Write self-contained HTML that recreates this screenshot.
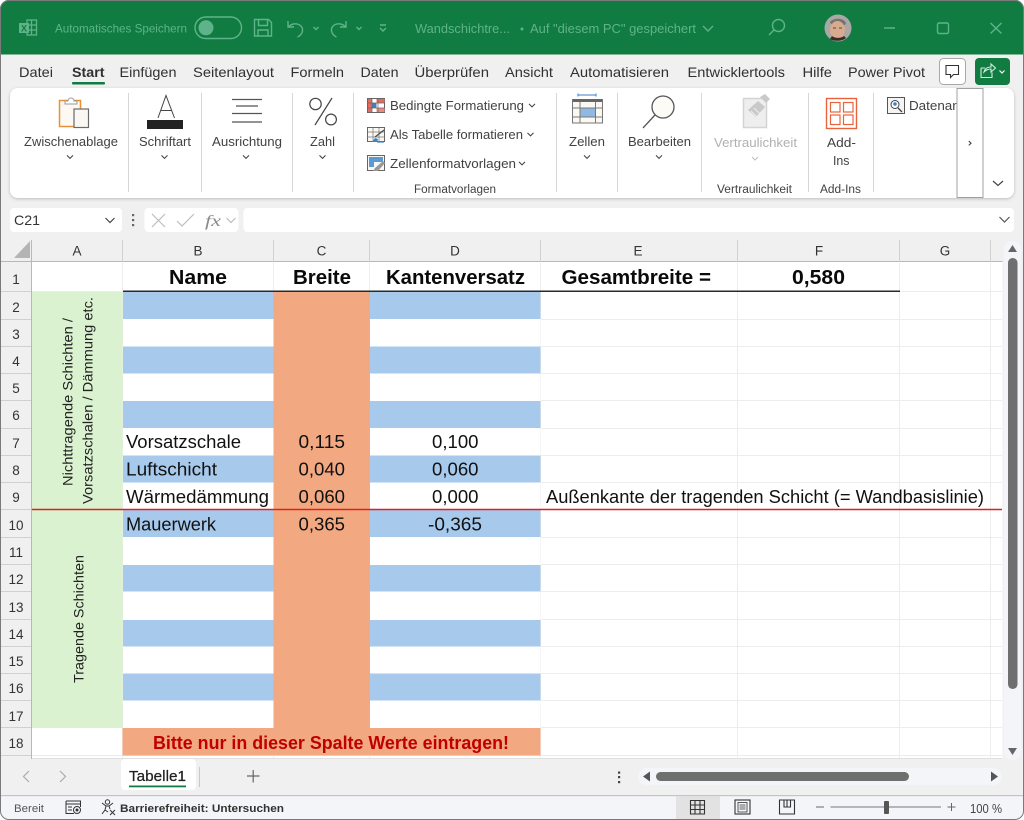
<!DOCTYPE html>
<html lang="de"><head><meta charset="utf-8"><title>Excel</title>
<style>
html,body{margin:0;padding:0;background:#fff;width:1024px;height:820px;overflow:hidden}
svg{display:block}
text{font-family:"Liberation Sans",sans-serif;fill:#262626}
.t{font-size:14px;fill:#303030}
.r{font-size:12.5px;fill:#424242}
.m{font-size:12px;fill:#5fb38a}
.h{font-size:13.5px;fill:#333;text-anchor:middle}
.c{font-size:18px;fill:#111}
.b{font-size:20px;font-weight:bold;fill:#0a0a0a}
.ch{fill:none;stroke:#444;stroke-width:1.1}
.ic{fill:none;stroke:#6a6a6a;stroke-width:1.2}
.gl{stroke:#ededed;stroke-width:1}
.tg{fill:none;stroke:#5fb38a;stroke-width:1.4}
</style></head><body>
<svg width="1024" height="820" viewBox="0 0 1024 820" xmlns="http://www.w3.org/2000/svg">
<defs>
<path id="cv" d="M-3-1.6 0 1.4 3-1.6" class="ch"/>
<filter id="sh" x="-2%" y="-5%" width="104%" height="112%"><feDropShadow dx="0" dy="1" stdDeviation="1.5" flood-color="#000" flood-opacity=".22"/></filter>
<clipPath id="win"><rect x="0" y="0" width="1024" height="820" rx="9"/></clipPath>
<clipPath id="dat"><rect x="880" y="90" width="77" height="30"/></clipPath>
</defs>
<g clip-path="url(#win)">
<rect width="1024" height="820" fill="#f0f0f0"/>
<!-- title bar -->
<rect width="1024" height="54.5" fill="#107c41"/>
<rect width="1024" height="1" fill="#6b7a70"/>
<g fill="none" stroke="#5fb38a" stroke-width="1.3"><rect x="27" y="20" width="9.5" height="15" /><path d="M27 25h9.5M27 30h9.5M31.5 20v15"/></g>
<rect x="19" y="23" width="10" height="10" fill="#5fb38a"/><text x="21" y="31.5" font-size="9" font-weight="bold" style="fill:#107c41">X</text>
<text class="m" x="55" y="32.5" textLength="132" lengthAdjust="spacingAndGlyphs">Automatisches Speichern</text>
<rect x="195" y="17" width="46.500" height="21.500" rx="10.700" class="tg"/><circle cx="206" cy="27.800" r="7.500" fill="#5fb38a"/>
<path class="tg" d="M254.500 19.500h14l3 3v13.500h-17zM258.500 19.500v6h9v-6M258 36v-6h10v6"/>
<path class="tg" d="M288 21v6h6M288.500 27c5-6 15-3 14 4-.5 3-3 5-5 6"/>
<path class="tg" stroke-width="1" d="M313.500 27l2.500 2.500 2.500-2.500M356.500 27l2.500 2.500 2.500-2.500M380 25h6M380 28l3 3 3-3"/>
<path class="tg" d="M346 21v6h-6M345.500 27c-5-6-15-3-14 4 .5 3 3 5 5 6"/>
<text class="m" x="415" y="33" textLength="95" lengthAdjust="spacingAndGlyphs" style="font-size:13px">Wandschichtre...</text>
<circle cx="522" cy="29" r="1.500" fill="#5fb38a"/>
<text class="m" x="530" y="33" textLength="166" lengthAdjust="spacingAndGlyphs" style="font-size:13px">Auf "diesem PC" gespeichert</text>
<path class="tg" d="M703 26l5 5 5-5"/>
<circle cx="778.500" cy="25.500" r="6" class="tg"/><path class="tg" d="M774 30l-5 5"/>
<circle cx="838" cy="28" r="13.500" fill="#a8a8a6"/><path d="M830 22c3-4 13-5 16 1l-1 2-14-1z" fill="#77736f"/><ellipse cx="837.500" cy="30" rx="7.500" ry="9" fill="#d8aa8e"/><path d="M830 39c4 2.500 12 2.500 16-1l-2-2c-3 2.500-9 2.500-12 0z" fill="#3a2c28"/><path d="M833 28h3M839 28h3" stroke="#5a4a46" stroke-width="1"/>
<path class="tg" d="M884 28h11"/><rect x="937.500" y="23" width="11" height="10.500" rx="1.500" class="tg"/><path class="tg" d="M990.500 23l11 10.500M1001.500 23l-11 10.500"/>
<!-- tabs -->
<g class="t">
<text class="t" x="19" y="77" textLength="34" lengthAdjust="spacingAndGlyphs">Datei</text>
<text class="t" x="72" y="77" textLength="32.500" lengthAdjust="spacingAndGlyphs" font-weight="bold">Start</text>
<text class="t" x="119.500" y="77" textLength="57" lengthAdjust="spacingAndGlyphs">Einfügen</text>
<text class="t" x="193" y="77" textLength="81" lengthAdjust="spacingAndGlyphs">Seitenlayout</text>
<text class="t" x="290.500" y="77" textLength="53.500" lengthAdjust="spacingAndGlyphs">Formeln</text>
<text class="t" x="360.500" y="77" textLength="38" lengthAdjust="spacingAndGlyphs">Daten</text>
<text class="t" x="414.500" y="77" textLength="74.500" lengthAdjust="spacingAndGlyphs">Überprüfen</text>
<text class="t" x="505" y="77" textLength="48" lengthAdjust="spacingAndGlyphs">Ansicht</text>
<text class="t" x="570" y="77" textLength="99" lengthAdjust="spacingAndGlyphs">Automatisieren</text>
<text class="t" x="687.500" y="77" textLength="97.500" lengthAdjust="spacingAndGlyphs">Entwicklertools</text>
<text class="t" x="802.500" y="77" textLength="29.500" lengthAdjust="spacingAndGlyphs">Hilfe</text>
<text class="t" x="848" y="77" textLength="77" lengthAdjust="spacingAndGlyphs">Power Pivot</text>
</g>
<rect x="72" y="82" width="33" height="2.500" rx="1" fill="#107c41"/>
<rect x="939.500" y="58.500" width="26" height="26" rx="4" fill="#fff" stroke="#a8a8a8"/>
<path d="M946 65.500h12.500v9h-5l-3 3v-3h-4.500z" fill="none" stroke="#333" stroke-width="1.100"/>
<rect x="975" y="58" width="35" height="27" rx="4" fill="#107c41"/>
<path d="M981 68v9.500h11v-5M981 68h4M984 72c1-4 4-5 7-5v-3l4.500 4-4.500 4v-3c-3 0-5 1-7 3z" fill="none" stroke="#d5ecdf" stroke-width="1.100"/>
<path d="M999.500 70.500l2.500 2.500 2.500-2.500" fill="none" stroke="#fff" stroke-width="1.200"/>
<!-- ribbon -->
<rect x="10" y="88" width="1004" height="110" rx="8" fill="#fff" filter="url(#sh)"/>
<g stroke="#d6d6d6" stroke-width="1"><path d="M128.500 93v99M201.500 93v99M292.500 93v99M353.500 93v99M556.500 93v99M617.500 93v99M701.500 93v99M808.500 93v99M873.500 93v99"/></g>
<!-- clipboard -->
<rect x="59.500" y="100.500" width="21" height="26" fill="#fdf8f1" stroke="#e8913a" stroke-width="1.500"/>
<path d="M65 104v-3h3c0-4 6-4 6 0h3v3z" fill="#fff" stroke="#999"/>
<rect x="74" y="109" width="14.500" height="18.500" fill="#fbf8f3" stroke="#6a6a6a" stroke-width="1.200"/>
<text class="r" x="24" y="146" textLength="94" lengthAdjust="spacingAndGlyphs">Zwischenablage</text><use href="#cv" x="70" y="157"/>
<!-- A -->
<path d="M158 118l8-22.500 8.500 22.500M161 110.500h11" fill="none" stroke="#444" stroke-width="1"/>
<rect x="147" y="120" width="36" height="9" fill="#222"/>
<text class="r" x="139" y="146" textLength="52" lengthAdjust="spacingAndGlyphs">Schriftart</text><use href="#cv" x="164.500" y="157"/>
<!-- align -->
<path d="M232 99.500h30M236 106h22M232 113.500h30M232 122h30" stroke="#555" stroke-width="1.200" fill="none"/>
<text class="r" x="212" y="146" textLength="70" lengthAdjust="spacingAndGlyphs">Ausrichtung</text><use href="#cv" x="246" y="157"/>
<!-- percent -->
<circle cx="315.500" cy="104" r="5.700" class="ic" style="stroke:#444"/><circle cx="331" cy="119.500" r="5.400" class="ic" style="stroke:#444"/><path d="M332 98l-17 27" stroke="#444" stroke-width="1.200"/>
<text class="r" x="310" y="146" textLength="25" lengthAdjust="spacingAndGlyphs">Zahl</text><use href="#cv" x="322.500" y="157"/>
<!-- cond format -->
<rect x="367.500" y="98.500" width="17" height="14" fill="#fff" stroke="#666"/>
<rect x="368" y="99" width="4" height="13" fill="#e86a5f"/><rect x="372" y="103" width="4.500" height="5" fill="#3b82c4"/><rect x="376.500" y="99" width="8" height="4" fill="#e86a5f"/><rect x="376.500" y="108" width="8" height="4" fill="#f08a80"/>
<path d="M367.500 103h17M367.500 108h17M372 98.500v14M378 98.500v14" stroke="#666" stroke-width=".7"/>
<text class="r" x="390" y="110" textLength="134" lengthAdjust="spacingAndGlyphs">Bedingte Formatierung</text><use href="#cv" x="532" y="105.500"/>
<!-- table -->
<rect x="367.500" y="127.500" width="17" height="14" fill="#fbf8f3" stroke="#666"/><path d="M367.500 132h17M367.500 137h17M373 127.500v14M379 127.500v14" stroke="#777" stroke-width=".7"/>
<path d="M372 142l3-4 3 1-1 3z" fill="#3b82c4"/><path d="M375 137l9-7" stroke="#555" stroke-width="1.400"/><path d="M377 142h7" stroke="#3b82c4" stroke-width="1.200"/>
<text class="r" x="390" y="139" textLength="133" lengthAdjust="spacingAndGlyphs">Als Tabelle formatieren</text><use href="#cv" x="530.500" y="134.500"/>
<!-- style -->
<rect x="367.500" y="155.500" width="17" height="15" fill="#fbf8f3" stroke="#666"/><rect x="369" y="157" width="14" height="5" fill="#5b9bd5"/><rect x="369" y="157" width="5" height="10" fill="#5b9bd5"/>
<path d="M373 171l2-3 8-7 2 2-7 8z" fill="#999"/>
<text class="r" x="390" y="168" textLength="126" lengthAdjust="spacingAndGlyphs">Zellenformatvorlagen</text><use href="#cv" x="522" y="163.500"/>
<text class="r" x="414" y="193" textLength="82" lengthAdjust="spacingAndGlyphs" style="font-size:11.500px">Formatvorlagen</text>
<!-- cells -->
<path d="M578 95h18M578 93.500v3M596 93.500v3" stroke="#3b82c4" stroke-width="1"/>
<rect x="572" y="99" width="31" height="24" fill="#fbf8f3"/><rect x="572" y="99" width="31" height="3" fill="#666"/>
<rect x="580" y="108" width="15.500" height="9" fill="#8fb9e2" stroke="#3b82c4"/>
<path d="M572.500 99v24h30v-24M572.500 108h30M572.500 117h30M580 102v21M595.500 102v21" fill="none" stroke="#777" stroke-width="1"/>
<text class="r" x="569" y="146" textLength="36" lengthAdjust="spacingAndGlyphs">Zellen</text><use href="#cv" x="587" y="157"/>
<!-- find -->
<circle cx="663" cy="107" r="11" fill="#fdfbf6" stroke="#555" stroke-width="1.300"/><path d="M655 115l-12 13" stroke="#555" stroke-width="1.300"/>
<text class="r" x="628" y="146" textLength="63" lengthAdjust="spacingAndGlyphs">Bearbeiten</text><use href="#cv" x="659" y="157"/>
<!-- sens -->
<rect x="743.500" y="98.500" width="23" height="29" fill="#eee" stroke="#d4d4d4" stroke-width="1.500"/>
<path d="M748 110l10-9 7 6-9 10z" fill="#c9c9c9"/><path d="M760 97l5-3 5 5-4 4z" fill="#c9c9c9"/><path d="M751 111l7 7M754 108l7 7" stroke="#eee"/>
<text x="714" y="147" class="r" textLength="83" lengthAdjust="spacingAndGlyphs" style="fill:#b0b0b0">Vertraulichkeit</text>
<path d="M752 157l3 3 3-3" fill="none" stroke="#bdbdbd"/>
<text class="r" x="717" y="193" textLength="75" lengthAdjust="spacingAndGlyphs" style="font-size:11.500px">Vertraulichkeit</text>
<!-- addins -->
<rect x="826.500" y="98.500" width="30" height="30" fill="#fff" stroke="#e8643c" stroke-width="1.400"/>
<rect x="830.500" y="102.500" width="9.500" height="9.500" fill="#fff" stroke="#e8643c" stroke-width="1.200"/><rect x="843.500" y="102.500" width="9.500" height="9.500" fill="#fff" stroke="#e8643c" stroke-width="1.200"/><rect x="830.500" y="115" width="9.500" height="9.500" fill="#fff" stroke="#e8643c" stroke-width="1.200"/><rect x="843.500" y="115" width="9.500" height="9.500" fill="#fff" stroke="#e8643c" stroke-width="1.200"/>
<text class="r" x="827" y="147" textLength="29" lengthAdjust="spacingAndGlyphs">Add-</text>
<text class="r" x="833" y="165" textLength="16.500" lengthAdjust="spacingAndGlyphs">Ins</text>
<text class="r" x="820" y="193" textLength="41" lengthAdjust="spacingAndGlyphs" style="font-size:11.500px">Add-Ins</text>
<!-- data -->
<rect x="887.500" y="97.500" width="17" height="16" fill="#f4f4f4" stroke="#555"/><circle cx="895" cy="104.500" r="4" fill="#fff" stroke="#444"/><circle cx="895" cy="104" r="1.800" fill="#3b82c4"/><path d="M898 108l4 4" stroke="#444" stroke-width="1.300"/>
<g clip-path="url(#dat)"><text class="r" x="909" y="110" textLength="82" lengthAdjust="spacingAndGlyphs">Datenanalyse</text></g>
<rect x="957" y="88.500" width="26" height="109" fill="#fff" stroke="#a0a0a0"/>
<path d="M968.800 141l2.200 2.200-2.200 2.200" fill="none" stroke="#444" stroke-width="1.100"/>
<path d="M993 181l5 4.500 5-4.500" fill="none" stroke="#444" stroke-width="1.200"/>
<!-- formula bar -->
<rect x="10" y="208" width="112" height="24" rx="4" fill="#fff"/>
<text x="14" y="225" font-size="14" textLength="26" lengthAdjust="spacingAndGlyphs" style="fill:#333">C21</text>
<path d="M105.500 218l4.500 4.500 4.500-4.500" fill="none" stroke="#444" stroke-width="1.200"/>
<g fill="#666"><rect x="132" y="214" width="2.200" height="2.200"/><rect x="132" y="219" width="2.200" height="2.200"/><rect x="132" y="224" width="2.200" height="2.200"/></g>
<rect x="144.500" y="208" width="94" height="24" rx="4" fill="#fff"/>
<path d="M152 214l13 13M165 214l-13 13M177 221l5 5 12-12" fill="none" stroke="#bdbdbd" stroke-width="1.200"/>
<text x="205" y="226" font-size="16" font-style="italic" textLength="16" lengthAdjust="spacingAndGlyphs" style="font-family:'Liberation Serif',serif;fill:#8a8a8a">fx</text>
<path d="M226.500 218l4.500 4.500 4.500-4.500" fill="none" stroke="#bdbdbd" stroke-width="1.200"/>
<rect x="243.500" y="208" width="770.500" height="24" rx="4" fill="#fff"/>
<path d="M999.500 217l5 5 5-5" fill="none" stroke="#555" stroke-width="1.200"/>
<!-- grid -->
<rect x="1" y="240" width="1002" height="22" fill="#f0f0f0"/>
<rect x="1" y="262" width="30.500" height="497" fill="#f0f0f0"/>
<rect x="32" y="262" width="970.500" height="497" fill="#fff"/>
<path d="M14 258h16v-17z" fill="#b4b4b4"/>
<path d="M0 261.500h1003M31.500 240v519" stroke="#b8b8b8" stroke-width="1" fill="none"/>
<g stroke="#d0d0d0"><path d="M122.500 240v22M273.500 240v22M369.500 240v22M540.500 240v22M737.500 240v22M899.500 240v22M990.500 240v22"/>
<path d="M1 291.500h30M1 319.500h30M1 346.500h30M1 373.500h30M1 400.500h30M1 428.500h30M1 455.500h30M1 482.500h30M1 509.500h30M1 537.500h30M1 564.500h30M1 591.500h30M1 619.500h30M1 646.500h30M1 673.500h30M1 700.500h30M1 727.500h30M1 755.500h30"/></g>
<g class="gl"><path d="M32 291.500h970M32 319.500h970M32 346.500h970M32 373.500h970M32 400.500h970M32 428.500h970M32 455.500h970M32 482.500h970M32 509.500h970M32 537.500h970M32 564.500h970M32 591.500h970M32 619.500h970M32 646.500h970M32 673.500h970M32 700.500h970M32 727.500h970"/>
<path d="M122.500 262v497M273.500 262v497M369.500 262v497M540.500 262v497M737.500 262v497M899.500 262v497M990.500 262v497"/></g>
<path d="M32 755.500h970" stroke="#e4eef8"/><path d="M32 758.500h970" stroke="#e0e0e0"/>
<!-- fills -->
<rect x="32" y="292" width="90.500" height="436" fill="#daf2d0"/>
<rect x="123" y="319" width="150.500" height="409" fill="#fff"/><rect x="370" y="319" width="170.500" height="409" fill="#fff"/>
<g fill="#a6c9ec">
<rect x="123" y="292" width="150.500" height="27"/><rect x="123" y="346.500" width="150.500" height="27"/><rect x="123" y="401" width="150.500" height="27"/><rect x="123" y="455.500" width="150.500" height="27"/><rect x="123" y="510" width="150.500" height="27"/><rect x="123" y="565" width="150.500" height="26.500"/><rect x="123" y="620" width="150.500" height="26.500"/><rect x="123" y="673.500" width="150.500" height="27"/>
<rect x="370" y="292" width="170.500" height="27"/><rect x="370" y="346.500" width="170.500" height="27"/><rect x="370" y="401" width="170.500" height="27"/><rect x="370" y="455.500" width="170.500" height="27"/><rect x="370" y="510" width="170.500" height="27"/><rect x="370" y="565" width="170.500" height="26.500"/><rect x="370" y="620" width="170.500" height="26.500"/><rect x="370" y="673.500" width="170.500" height="27"/>
</g>
<rect x="273.500" y="292" width="96.500" height="436" fill="#f2a981"/>
<rect x="122.500" y="728" width="418" height="27.500" fill="#f2a981"/>
<path d="M123 291.300h777" stroke="#2a2a2a" stroke-width="1.500"/>
<path d="M32 509.500h970" stroke="#e02020" stroke-width="1.400"/>
<!-- headers -->
<text class="h" x="77" y="255.500">A</text><text class="h" x="198" y="255.500">B</text><text class="h" x="321.500" y="255.500">C</text><text class="h" x="455" y="255.500">D</text><text class="h" x="638" y="255.500">E</text><text class="h" x="819" y="255.500">F</text><text class="h" x="945" y="255.500">G</text>
<text class="h" x="16" y="284">1</text><text class="h" x="16" y="312">2</text><text class="h" x="16" y="339">3</text><text class="h" x="16" y="366">4</text><text class="h" x="16" y="393">5</text><text class="h" x="16" y="420">6</text><text class="h" x="16" y="448">7</text><text class="h" x="16" y="475">8</text><text class="h" x="16" y="502">9</text><text class="h" x="16" y="530">10</text><text class="h" x="16" y="557">11</text><text class="h" x="16" y="584">12</text><text class="h" x="16" y="612">13</text><text class="h" x="16" y="639">14</text><text class="h" x="16" y="666">15</text><text class="h" x="16" y="693">16</text><text class="h" x="16" y="721">17</text><text class="h" x="16" y="748">18</text>
<!-- cell text -->
<text class="b" x="169" y="284" textLength="58" lengthAdjust="spacingAndGlyphs">Name</text>
<text class="b" x="293" y="284" textLength="58" lengthAdjust="spacingAndGlyphs">Breite</text>
<text class="b" x="386" y="284" textLength="139" lengthAdjust="spacingAndGlyphs">Kantenversatz</text>
<text class="b" x="561.500" y="284" textLength="149.500" lengthAdjust="spacingAndGlyphs">Gesamtbreite =</text>
<text class="b" x="792" y="284" textLength="53" lengthAdjust="spacingAndGlyphs">0,580</text>
<text class="c" x="126" y="448" textLength="115" lengthAdjust="spacingAndGlyphs">Vorsatzschale</text>
<text class="c" x="126" y="475.500" textLength="91" lengthAdjust="spacingAndGlyphs">Luftschicht</text>
<text class="c" x="126" y="503" textLength="143" lengthAdjust="spacingAndGlyphs">Wärmedämmung</text>
<text class="c" x="126" y="530.500" textLength="90" lengthAdjust="spacingAndGlyphs">Mauerwerk</text>
<text class="c" x="298.500" y="448" textLength="46.500" lengthAdjust="spacingAndGlyphs">0,115</text>
<text class="c" x="298.500" y="475.500" textLength="46.500" lengthAdjust="spacingAndGlyphs">0,040</text>
<text class="c" x="298.500" y="503" textLength="46.500" lengthAdjust="spacingAndGlyphs">0,060</text>
<text class="c" x="298.500" y="530.500" textLength="46.500" lengthAdjust="spacingAndGlyphs">0,365</text>
<text class="c" x="432" y="448" textLength="46.500" lengthAdjust="spacingAndGlyphs">0,100</text>
<text class="c" x="432" y="475.500" textLength="46.500" lengthAdjust="spacingAndGlyphs">0,060</text>
<text class="c" x="432" y="503" textLength="46.500" lengthAdjust="spacingAndGlyphs">0,000</text>
<text class="c" x="428" y="530.500" textLength="54" lengthAdjust="spacingAndGlyphs">-0,365</text>
<text class="c" x="546" y="503" textLength="438" lengthAdjust="spacingAndGlyphs">Außenkante der tragenden Schicht (= Wandbasislinie)</text>
<text x="153" y="749" font-size="18" font-weight="bold" textLength="356" lengthAdjust="spacingAndGlyphs" style="fill:#c00000">Bitte nur in dieser Spalte Werte eintragen!</text>
<text transform="translate(72.500 486) rotate(-90)" font-size="14" textLength="168" lengthAdjust="spacingAndGlyphs" style="fill:#222">Nichttragende Schichten /</text>
<text transform="translate(92.500 504) rotate(-90)" font-size="14" textLength="207" lengthAdjust="spacingAndGlyphs" style="fill:#222">Vorsatzschalen / Dämmung etc.</text>
<text transform="translate(83.500 683) rotate(-90)" font-size="14" textLength="128" lengthAdjust="spacingAndGlyphs" style="fill:#222">Tragende Schichten</text>
<!-- v scroll -->
<rect x="1002.500" y="240" width="21.500" height="555" fill="#f0f0f0"/>
<rect x="1004" y="241" width="17" height="519" rx="8" fill="#f3f5f8"/>
<rect x="1008" y="258" width="9.500" height="431" rx="4.700" fill="#6f6f6f"/>
<path d="M1008 252l4.500-7 4.500 7zM1008 748l4.500 7 4.500-7z" fill="#666"/>
<!-- sheet bar -->
<rect x="1" y="759" width="1002" height="36" fill="#f0f0f0"/>
<path d="M121 763a4 4 0 0 1 4-4h67a4 4 0 0 1 4 4v23a4 4 0 0 1-4 4h-67a4 4 0 0 1-4-4z" fill="#fff"/>
<text x="129" y="781" font-size="15" textLength="57" lengthAdjust="spacingAndGlyphs" style="fill:#222;stroke:#222;stroke-width:.25">Tabelle1</text>
<rect x="129" y="785.500" width="57" height="1.800" fill="#107c41"/>
<path d="M199.500 767v20" stroke="#c8c8c8"/>
<path d="M247 776h12.500M253.200 770v12.500" stroke="#666" stroke-width="1.200"/>
<path d="M29 771l-5.500 5.500 5.500 5.500M60 771l5.500 5.500-5.500 5.500" fill="none" stroke="#aaa" stroke-width="1.200"/>
<g fill="#444"><rect x="618" y="771.500" width="2.200" height="2.200"/><rect x="618" y="776" width="2.200" height="2.200"/><rect x="618" y="781" width="2.200" height="2.200"/></g>
<rect x="638" y="768" width="364" height="17" rx="8.500" fill="#f3f5f8"/>
<rect x="656" y="772" width="253" height="9" rx="4.500" fill="#6f6f6f"/>
<path d="M650 771.500l-7 5 7 5zM991 771.500l7 5-7 5z" fill="#555"/>
<!-- status -->
<rect x="0" y="795" width="1024" height="25" fill="#f3f5f8"/>
<rect x="0" y="795" width="1024" height="1.200" fill="#c4c4c4"/>
<text x="14" y="812" font-size="11" textLength="30" lengthAdjust="spacingAndGlyphs" style="fill:#555">Bereit</text>
<path d="M66 801h14.500v6M66 801v12.500h8M66 804h14.500M68 807h4M68 810h4" fill="none" stroke="#333" stroke-width="1"/><circle cx="77" cy="810" r="3.500" fill="none" stroke="#333"/><circle cx="77" cy="810" r="1.500" fill="#333"/>
<circle cx="107.500" cy="802" r="2.200" fill="none" stroke="#333"/><path d="M102 803l4 3h3l4-3M106 806l-1 4-3 4M109 806l1 3M110 810l5 5M115 810l-5 5M105 810l3 2" fill="none" stroke="#333" stroke-width="1"/>
<text x="120" y="812" font-size="11" font-weight="bold" textLength="164" lengthAdjust="spacingAndGlyphs" style="fill:#333">Barrierefreiheit: Untersuchen</text>
<rect x="676" y="796" width="44" height="24" fill="#e2e2e2"/>
<path d="M690.500 800.500h14v13.500h-14zM690.500 805h14M690.500 809.500h14M695 800.500v13.500M700 800.500v13.500" fill="none" stroke="#333" stroke-width="1.100"/>
<rect x="735" y="800" width="15" height="14" fill="none" stroke="#333" stroke-width="1.100"/><rect x="738" y="802.500" width="9" height="9.500" fill="none" stroke="#333" stroke-width=".8"/><path d="M739.500 805h6M739.500 807h6M739.500 809h6" stroke="#333" stroke-width=".7"/>
<path d="M779.500 800h15v14h-15zM784 800v7h6.500v-7M787 800v7" fill="none" stroke="#333" stroke-width="1.100"/>
<path d="M816 807h8M947.500 807h8M951.500 803v8" stroke="#666" stroke-width="1"/>
<path d="M830.500 807h110.500" stroke="#777" stroke-width="1.100"/><rect x="884" y="801" width="5" height="13" rx="1" fill="#555"/>
<text x="970" y="813" font-size="12.500" textLength="32" lengthAdjust="spacingAndGlyphs" style="fill:#444">100 %</text>
</g>
<path d="M.5 9A8.500 8.500 0 0 1 9 .5H1015a8.500 8.500 0 0 1 8.500 8.500V811a8.500 8.500 0 0 1-8.500 8.500H9A8.500 8.500 0 0 1 .5 811z" fill="none" stroke="#7a7a7a"/>
</svg>
</body></html>
